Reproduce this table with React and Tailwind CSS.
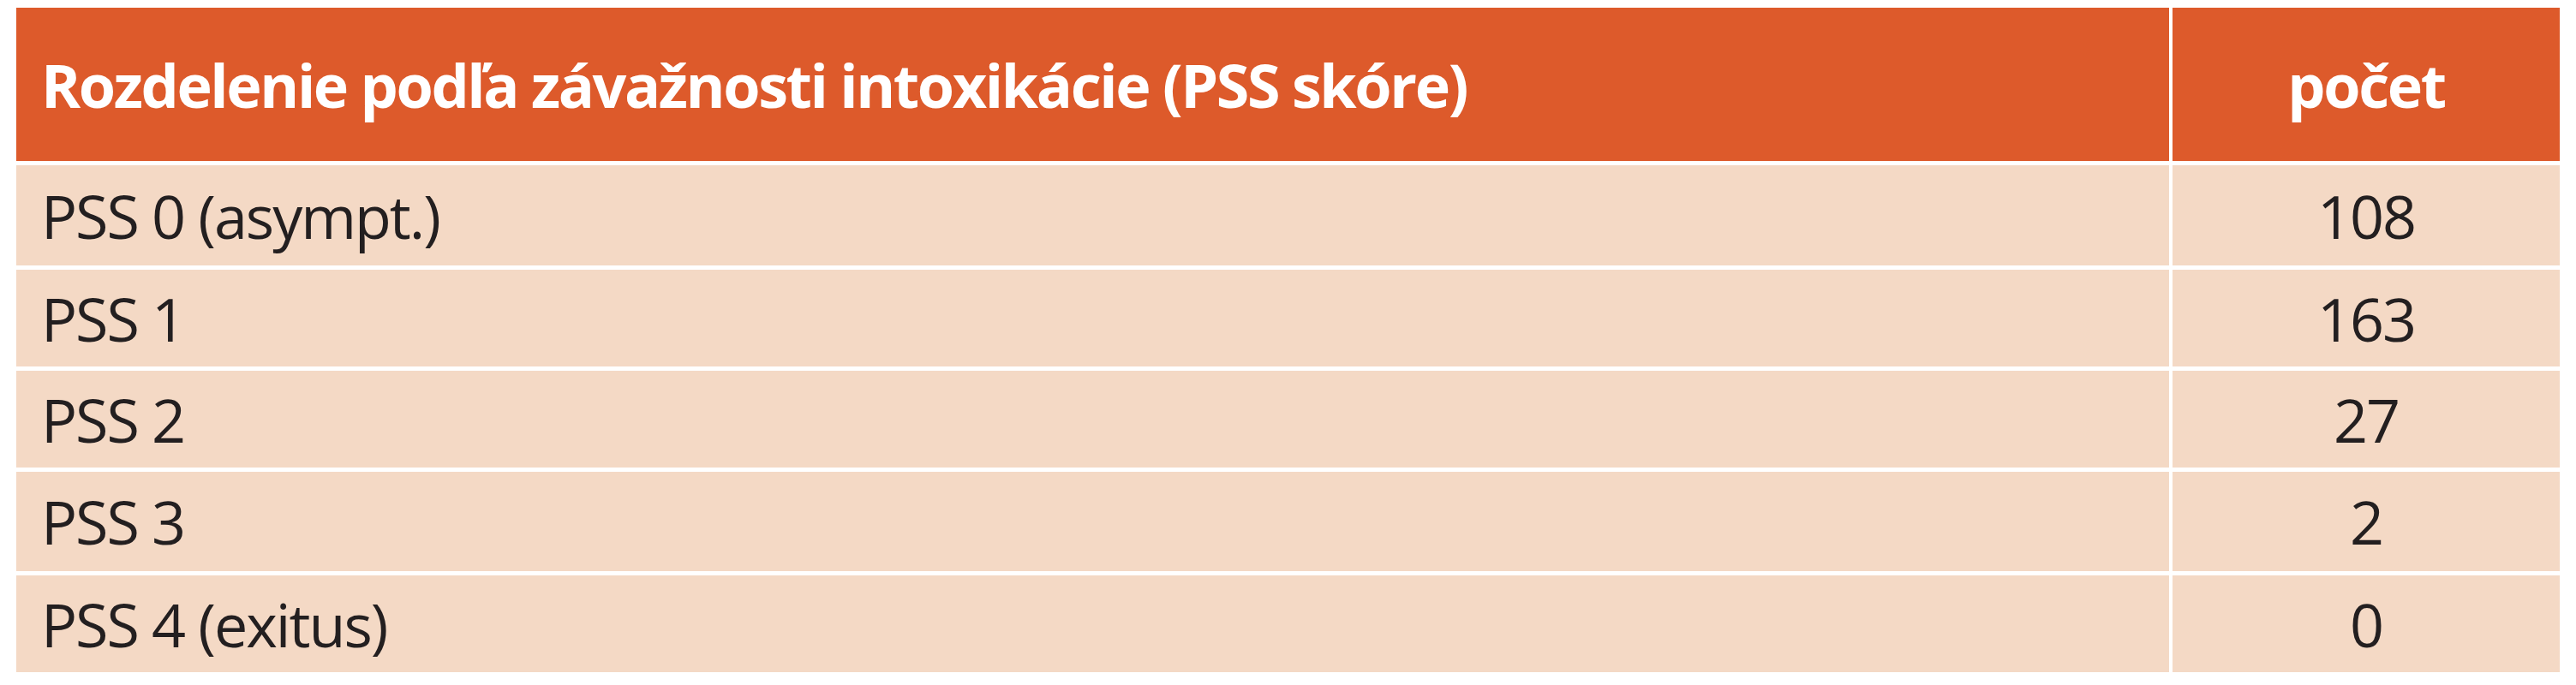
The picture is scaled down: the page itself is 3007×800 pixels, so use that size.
const rows = [
  { label: "PSS 0 (asympt.)", count: "108", h: "h-[117px]" },
  { label: "PSS 1", count: "163", h: "h-[113px]" },
  { label: "PSS 2", count: "27", h: "h-[113px]" },
  { label: "PSS 3", count: "2", h: "h-[116px]" },
  { label: "PSS 4 (exitus)", count: "0", h: "h-[113px]" },
];

const App = () => (
  <div className="w-[3007px] h-[800px] bg-white pt-[9px] pl-[19px] font-['Open_Sans',sans-serif]">
    <div className="w-[2969px] flex flex-col gap-[5px]">
      <div className="grid grid-cols-[2513px_452px] gap-x-[4px] h-[179px]">
        <div className="bg-[#dd5a2b] text-white font-bold text-[70px] leading-none tracking-[-2.4px] flex items-center pl-[29px]">
          Rozdelenie podľa závažnosti intoxikácie (PSS skóre)
        </div>
        <div className="bg-[#dd5a2b] text-white font-bold text-[70px] leading-none tracking-[-2.4px] flex items-center justify-center">
          počet
        </div>
      </div>
      {rows.map((r) => (
        <div key={r.label} className={`grid grid-cols-[2513px_452px] gap-x-[4px] ${r.h}`}>
          <div className="bg-[#f4d9c5] text-[#231f20] text-[70px] leading-none tracking-[-2px] flex items-center pl-[29px]">
            {r.label}
          </div>
          <div className="bg-[#f4d9c5] text-[#231f20] text-[70px] leading-none tracking-[-2px] flex items-center justify-center">
            {r.count}
          </div>
        </div>
      ))}
    </div>
  </div>
);

export default App;
